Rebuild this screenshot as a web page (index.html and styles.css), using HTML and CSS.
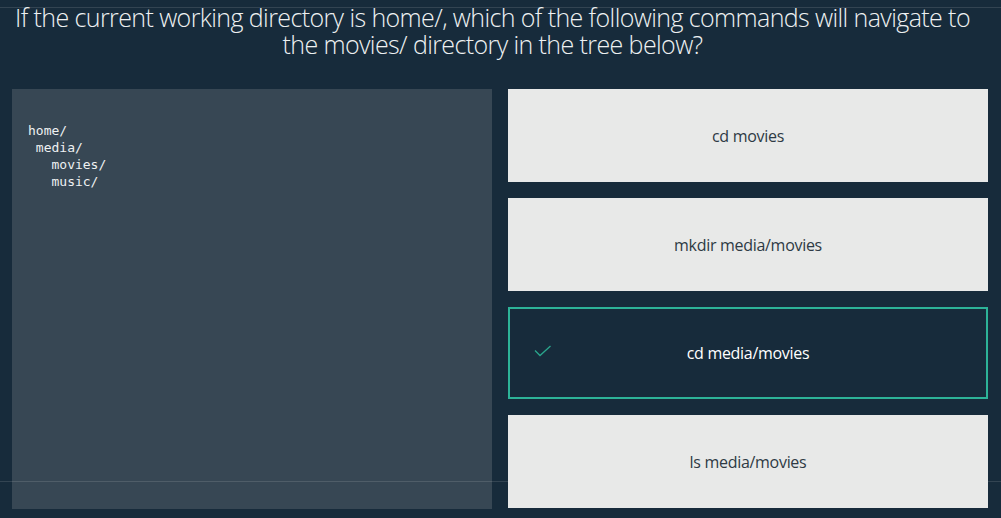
FILE: index.html
```html
<!DOCTYPE html>
<html>
<head>
<meta charset="utf-8">
<link rel="stylesheet" href="styles.css">
</head>
<body>
<div class="rule rule-top"></div>
<div class="rule rule-bottom"></div>
<h1 class="question">If the current working directory is home/, which of the following commands will navigate to the movies/ directory in the tree below?</h1>
<main class="content">
  <section class="code-panel">
<pre class="tree">home/
 media/
   movies/
   music/</pre>
  </section>
  <section class="choices">
    <div class="choice">cd movies</div>
    <div class="choice">mkdir media/movies</div>
    <div class="choice choice-selected">
      <svg class="check" width="18" height="12" viewBox="0 0 18 12"><path d="M1 5.5 L6 10.5 L16.5 1" fill="none" stroke="#2aa58c" stroke-width="1.3"/></svg>
      cd media/movies
    </div>
    <div class="choice">ls media/movies</div>
  </section>
</main>
</body>
</html>
```
FILE: styles.css
```css
html, body {
  margin: 0;
  padding: 0;
}
body {
  width: 1001px;
  height: 518px;
  background: #172b3b;
  font-family: "Open Sans", sans-serif;
  overflow: hidden;
  position: relative;
}
.rule {
  position: absolute;
  left: 0;
  right: 0;
  height: 1px;
  background: rgba(255,255,255,0.12);
}
.rule-top { top: 7px; }
.rule-bottom { top: 481px; }
.question {
  margin: 0;
  padding: 4px 28px 0 12px;
  height: 84px;
  box-sizing: border-box;
  font-weight: 300;
  font-size: 25px;
  line-height: 27px;
  color: #eef1f2;
  text-align: center;
  letter-spacing: -0.6px;
}
.content {
  display: flex;
  gap: 16px;
  padding: 5px 13px 0 12px;
}
.code-panel {
  width: 480px;
  height: 420px;
  background: #374754;
  box-sizing: border-box;
  padding: 33px 16px;
}
.tree {
  margin: 0;
  font-family: "DejaVu Sans Mono", monospace;
  font-size: 13px;
  line-height: 17px;
  color: #eef1f2;
}
.choices {
  width: 480px;
  display: flex;
  flex-direction: column;
  gap: 16px;
}
.choice {
  height: 93px;
  background: #e8e9e8;
  display: flex;
  align-items: center;
  justify-content: center;
  font-size: 16px;
  color: #2e3a44;
  position: relative;
  box-sizing: border-box;
  letter-spacing: -0.3px;
  padding-bottom: 0;
}
.choice-selected {
  background: #172b3b;
  border: 2px solid #2db398;
  color: #ffffff;
  height: 92px;
  font-weight: 500;
}
.check {
  position: absolute;
  left: 24px;
  top: 36px;
}
```
